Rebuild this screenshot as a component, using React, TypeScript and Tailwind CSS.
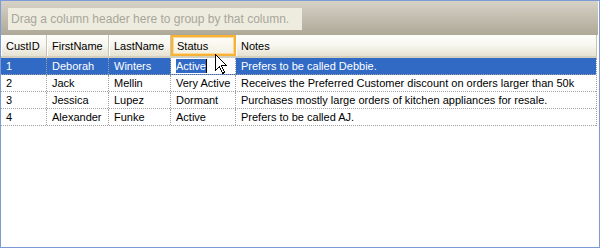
import React from "react";

const rows = [
  { id: "1", first: "Deborah", last: "Winters", status: "Active", notes: "Prefers to be called Debbie." },
  { id: "2", first: "Jack", last: "Mellin", status: "Very Active", notes: "Receives the Preferred Customer discount on orders larger than 50k" },
  { id: "3", first: "Jessica", last: "Lupez", status: "Dormant", notes: "Purchases mostly large orders of kitchen appliances for resale." },
  { id: "4", first: "Alexander", last: "Funke", status: "Active", notes: "Prefers to be called AJ." },
];

function Cursor() {
  return (
    <svg className="absolute left-[214px] top-[53px]" width="13" height="21" viewBox="0 0 13 21">
      <path
        d="M0.5 0.5 L0.5 16.5 L4.5 12.5 L7.5 19.5 L9.5 18.5 L6.5 11.5 L11.5 11.5 Z"
        fill="white"
        stroke="black"
        strokeWidth="1"
        shapeRendering="crispEdges"
      />
    </svg>
  );
}

function HeaderCell({ w, label, hot }: { w: string; label: string; hot?: boolean }) {
  if (hot) {
    return (
      <div className={`${w} h-full shrink-0 flex items-center pl-[4px] pt-[2px] border-2 border-[#f8b336] bg-gradient-to-b from-[#fffef8] to-[#f2efe2] shadow-[inset_0_0_0_1px_#fcd898]`}>
        <span>{label}</span>
      </div>
    );
  }
  return (
    <div className={`${w} h-full shrink-0 flex items-center pl-[5px] pt-[2px] border-r border-[#c9c5b5] shadow-[inset_1px_0_0_#ffffff]`}>
      <span>{label}</span>
    </div>
  );
}

export default function App() {
  return (
    <div
      className="relative w-[600px] h-[248px] border border-[#7b9ad6] bg-white text-[11px] text-black overflow-hidden"
      style={{ fontFamily: "Tahoma, 'Liberation Sans', Arial, sans-serif" }}
    >
      {/* group panel */}
      <div className="h-[34px] mr-[1px] bg-gradient-to-b from-[#d7d2c7] to-[#aea897] pt-[7px] pl-[7px]">
        <div className="w-[294px] h-[22px] bg-[#eeecdf] flex items-center pl-[3px] text-[12px] text-[#a8a69b]">
          Drag a column header here to group by that column.
        </div>
      </div>
      {/* header */}
      <div className="h-[23px] mr-[2px] flex bg-gradient-to-b from-[#fefefb] via-[#f7f6ef] to-[#e6e2d2] border-b-2 border-[#d3cfbf]">
        <HeaderCell w="w-[46px]" label="CustID" />
        <HeaderCell w="w-[62px]" label="FirstName" />
        <HeaderCell w="w-[62px]" label="LastName" />
        <HeaderCell w="w-[65px]" label="Status" hot />
        <HeaderCell w="flex-1" label="Notes" />
      </div>
      {/* rows */}
      <div className="mr-[2px] border-r border-dotted border-[#a0a0a0]">
        {rows.map((r, i) => {
          const sel = i === 0;
          const cell = "h-full shrink-0 flex items-center pl-[5px] border-r border-dotted border-[#a0a0a0] whitespace-nowrap overflow-hidden";
          return (
            <div
              key={r.id}
              className={`h-[17px] flex border-b border-dotted border-[#a0a0a0] ${sel ? "bg-[#316ac5] text-white" : ""}`}
            >
              <div className={`w-[46px] ${cell}`}>{r.id}</div>
              <div className={`w-[62px] ${cell}`}>{r.first}</div>
              <div className={`w-[62px] ${cell}`}>{r.last}</div>
              {sel ? (
                <div className={`w-[65px] ${cell} bg-white pl-[3px]`}>
                  <span className="bg-[#316ac5] text-white h-[14px] leading-[14px]">{r.status}</span>
                  <span className="w-[1px] h-[14px] bg-black" />
                </div>
              ) : (
                <div className={`w-[65px] ${cell}`}>{r.status}</div>
              )}
              <div className={`flex-1 ${cell} border-r-0`}>{r.notes}</div>
            </div>
          );
        })}
      </div>
      <Cursor />
    </div>
  );
}
